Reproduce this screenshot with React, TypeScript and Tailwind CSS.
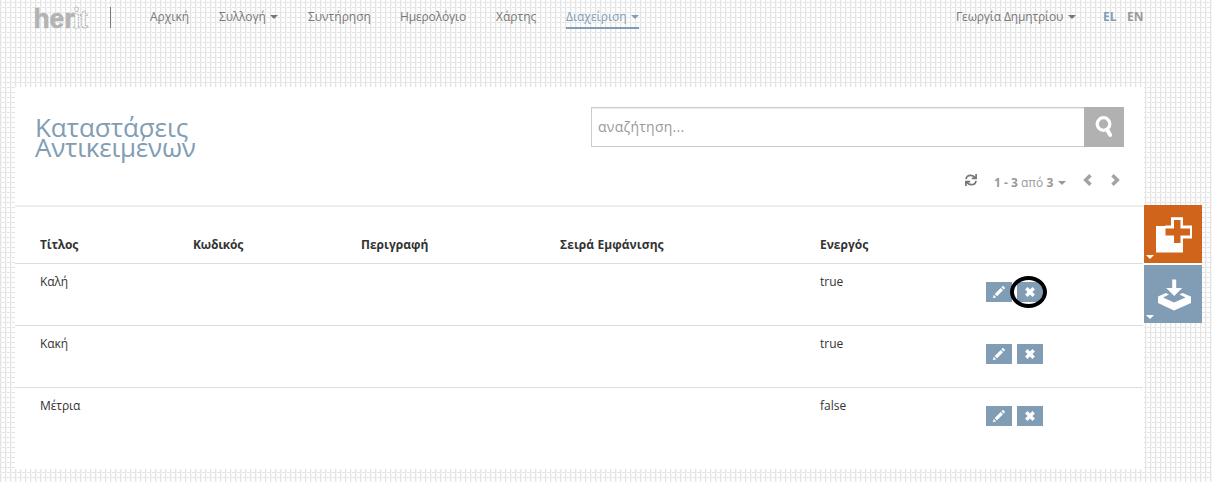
import React from "react";

const Caret = ({ className = "" }: { className?: string }) => (
  <span className={`inline-block h-0 w-0 border-x-4 border-t-4 border-x-transparent border-t-current ${className}`} />
);

const PencilIcon = () => (
  <svg width="14" height="14" viewBox="0 0 14 14" fill="#fff">
    <path d="M.8 13.200l1-3.400L4.200 12.200zM2.700 9L8.700 3l2.300 2.300-6 6zM9.400 2.300l1-1q.6-.5 1.200 0l1.100 1.100q.5.600 0 1.200l-1 1z" />
  </svg>
);

const CrossIcon = () => (
  <svg width="12" height="12" viewBox="0 0 12 12">
    <path d="M2.300 2.300l7.400 7.400M9.700 2.300L2.300 9.700" stroke="#fff" strokeWidth="3.400" />
  </svg>
);

const Chevron = ({ right = false }: { right?: boolean }) => (
  <svg width="10" height="12" viewBox="0 0 10 12" className={right ? "rotate-180" : ""}>
    <path d="M7.500 1.300L2.700 6l4.800 4.700" fill="none" stroke="#a3a3a3" strokeWidth="3.500" />
  </svg>
);

const rows = [
  { title: "Καλή", active: "true", marked: true },
  { title: "Κακή", active: "true", marked: false },
  { title: "Μέτρια", active: "false", marked: false },
];

const columns = "grid grid-cols-[153px_168px_199px_260px_166px_1fr] pl-[25px]";

export default function App() {
  return (
    <div className="h-[482px] w-[1212px] overflow-hidden bg-white bg-[linear-gradient(to_right,#e4e4e4_1px,#f6f6f6_1px,#f6f6f6_2px,transparent_2px),linear-gradient(to_bottom,#e4e4e4_1px,transparent_1px)] bg-[size:5px_5px] bg-[position:0px_2px] font-['Open_Sans','Noto_Sans',sans-serif] text-[12px] text-[#333]">
      <header className="flex h-[87px] w-[1144px] items-start pl-[35px] text-[#777]">
        <svg width="54" height="36" viewBox="0 0 54 36" className="shrink-0 overflow-visible">
          <text x="-1.500" y="27.500" textLength="41" lengthAdjust="spacingAndGlyphs" fontFamily="Liberation Sans" fontWeight="700" fontSize="27.500" fill="#b3b3b3" stroke="#b3b3b3" strokeWidth="0.600">her</text>
          <text x="38" y="27.500" textLength="15" lengthAdjust="spacingAndGlyphs" fontFamily="Liberation Serif" fontWeight="700" fontSize="29" fill="#fff" stroke="#888" strokeWidth="0.700" strokeDasharray="2 .6">it</text>
        </svg>
        <div className="ml-[21px] mt-[7px] h-[21px] w-px bg-[#777]" />
        <nav className="ml-[39px] mt-[7px] flex leading-[20px]">
          <a className="w-[69px]">Αρχική</a>
          <a className="flex w-[89px] whitespace-nowrap"><span className="w-[51px] tracking-[-0.15px]">Συλλογή</span><Caret className="mt-[8px]" /></a>
          <a className="w-[92px]">Συντήρηση</a>
          <a className="w-[96px] tracking-[-0.15px]">Ημερολόγιο</a>
          <a className="w-[70px]">Χάρτης</a>
          <a className="flex h-[22px] w-[73px] whitespace-nowrap border-b-2 border-[#809db5] text-[#809db5]"><span className="w-[65px]">Διαχείριση</span><Caret className="mt-[8px]" /></a>
        </nav>
        <div className="ml-auto mt-[7px] flex leading-[20px]">
          <span className="flex w-[147px] whitespace-nowrap"><span className="w-[112px] tracking-[-0.15px]">Γεωργία Δημητρίου</span><Caret className="mt-[8px]" /></span>
          <b className="w-[24px] text-[#809db5]">EL</b>
          <b className="w-[17px] text-[#999]">EN</b>
        </div>
      </header>

      <div className="flex items-start">
        <main className="ml-[15px] h-[382px] w-[1129px] bg-white">
          <section className="flex h-[120px] justify-between border-b-2 border-[#eee] pl-[20px] pr-[20px] pt-[20px]">
            <h1 className="mt-[10px] w-[220px] text-[26px] leading-[20px] text-[#809db5]"><span className="block tracking-[-0.050px]">Καταστάσεις</span><span className="block tracking-[-0.220px]">Αντικειμένων</span></h1>
            <div className="w-[533px]">
              <div className="flex h-[40px]">
                <div className="flex-1 border border-r-0 border-[#ccc] pl-[6px] text-[14px] leading-[38px] tracking-[0.250px] text-[#999] shadow-[inset_0_1px_1px_rgba(0,0,0,0.075)]">αναζήτηση...</div>
                <div className="grid h-[40px] w-[40px] place-items-center bg-[#b1b1b1]">
                  <svg width="20" height="24" viewBox="0 0 20 24" fill="none" stroke="#fff">
                    <circle cx="9.500" cy="9" r="6.300" strokeWidth="3.300" />
                    <path d="M13 14.500l3.200 5.500" strokeWidth="4" strokeLinecap="round" />
                  </svg>
                </div>
              </div>
              <div className="flex h-[50px] items-start pl-[374px] pt-[27px] text-[#999]">
                <svg width="12" height="12" viewBox="0 0 12 12" fill="none" stroke="#777" strokeWidth="1.700">
                  <path d="M1 5.200Q1.500 1.400 5.500 1.300Q8.500 1.200 10.200 3.700M11.100 0v4.400H6.800M11 6.800Q10.500 10.600 6.500 10.700Q3.500 10.800 1.800 8.300M.9 12V7.600h4.300" />
                </svg>
                <span className="ml-[17px] mt-[-1px] flex w-[89px] whitespace-nowrap leading-[20px]"><span className="w-[64px] whitespace-nowrap"><b>1 - 3</b> από <b>3</b></span><Caret className="mt-[8px]" /></span>
                <Chevron />
                <span className="w-[17px]" />
                <Chevron right />
              </div>
            </div>
          </section>
          <div className={`${columns} h-[57px] w-[1128px] border-b border-[#ddd] pt-[28px] font-bold leading-[20px]`}>
            <span className="tracking-[-0.150px]">Τίτλος</span>
            <span className="tracking-[-0.200px]">Κωδικός</span>
            <span>Περιγραφή</span>
            <span className="tracking-[0.070px]">Σειρά Εμφάνισης</span>
            <span>Ενεργός</span>
          </div>
          {rows.map((row) => (
            <div key={row.title} className={`${columns} h-[62px] w-[1128px] border-b border-[#ddd] pt-[8px] leading-[20px] last:border-b-0`}>
              <span className="tracking-[-0.100px]">{row.title}</span>
              <span />
              <span />
              <span />
              <span>{row.active}</span>
              <span className="flex gap-[5px] pt-[10px]">
                <button className="grid h-[20px] w-[26px] place-items-center bg-[#809db5]"><PencilIcon /></button>
                <button className="relative grid h-[20px] w-[26px] place-items-center bg-[#809db5]">
                  <CrossIcon />
                  {row.marked && <i className="absolute left-[-7px] top-[-6px] h-[32px] w-[37px] rounded-[50%] border-4 border-black" />}
                </button>
              </span>
            </div>
          ))}
        </main>
        <aside className="mt-[118px] flex w-[58px] flex-col gap-[2px] bg-white text-white">
          <button className="relative h-[58px] bg-[#d0641b]">
            <svg width="58" height="58" viewBox="0 0 58 58">
              <path d="M12 21h27v26.500H12z" fill="#fff" />
              <path d="M28 13.300h10v8.200h9v11h-9v9h-10v-9h-6v-11h6z" fill="#fff" stroke="#fff" strokeWidth="2" />
              <path d="M30 15h6.500v8.500H46v7h-9.500V38H30v-7.500h-8.500v-7H30z" fill="#d0641b" />
            </svg>
            <Caret className="absolute left-[2px] top-[50px]" />
          </button>
          <button className="relative h-[58px] bg-[#809db5]">
            <svg width="58" height="58" viewBox="0 0 58 58" fill="#fff">
              <path d="M28.200 14.500h4v8.500h6l-8 8-8-8h6z" />
              <path d="M14 31.500l8-3.500 3 1.500-6 3 11 5 11.500-5-6-3 3-1.500 8.500 3.500v6.500l-17 7.500-16-7.500z" />
            </svg>
            <Caret className="absolute left-[2px] top-[50px]" />
          </button>
        </aside>
      </div>
    </div>
  );
}
